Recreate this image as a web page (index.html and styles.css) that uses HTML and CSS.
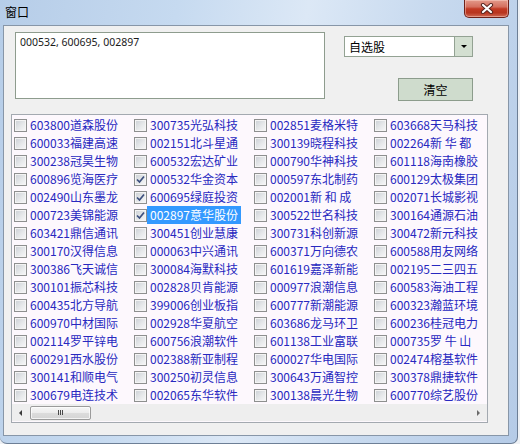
FILE: index.html
```html
<!DOCTYPE html>
<html>
<head>
<meta charset="utf-8">
<link rel="stylesheet" href="styles.css">
</head>
<body>
<div class="window">
  <div class="titlebar">
    <span class="title">窗口</span>
    <div class="close">
      <svg width="16" height="11" viewBox="0 0 16 11"><path d="M4 2 L12 9 M12 2 L4 9" stroke="#5a2620" stroke-width="4.2" stroke-linecap="round" fill="none"/><path d="M4 2 L12 9 M12 2 L4 9" stroke="#ffffff" stroke-width="2.2" stroke-linecap="round" fill="none"/></svg>
    </div>
  </div>
  <div class="client">
    <div class="top">
      <div class="codes">000532, 600695, 002897</div>
      <div class="side">
        <div class="combo"><span class="combo-text">自选股</span><span class="combo-btn"><span class="tri-down"></span></span></div>
        <div class="btn">清空</div>
      </div>
    </div>
    <div class="list">
      <div class="items">
        <div class="item"><span class="cb"></span><span class="lbl">603800道森股份</span></div>
        <div class="item"><span class="cb"></span><span class="lbl">600033福建高速</span></div>
        <div class="item"><span class="cb"></span><span class="lbl">300238冠昊生物</span></div>
        <div class="item"><span class="cb"></span><span class="lbl">600896览海医疗</span></div>
        <div class="item"><span class="cb"></span><span class="lbl">002490山东墨龙</span></div>
        <div class="item"><span class="cb"></span><span class="lbl">000723美锦能源</span></div>
        <div class="item"><span class="cb"></span><span class="lbl">603421鼎信通讯</span></div>
        <div class="item"><span class="cb"></span><span class="lbl">300170汉得信息</span></div>
        <div class="item"><span class="cb"></span><span class="lbl">300386飞天诚信</span></div>
        <div class="item"><span class="cb"></span><span class="lbl">300101振芯科技</span></div>
        <div class="item"><span class="cb"></span><span class="lbl">600435北方导航</span></div>
        <div class="item"><span class="cb"></span><span class="lbl">600970中材国际</span></div>
        <div class="item"><span class="cb"></span><span class="lbl">002114罗平锌电</span></div>
        <div class="item"><span class="cb"></span><span class="lbl">600291西水股份</span></div>
        <div class="item"><span class="cb"></span><span class="lbl">300141和顺电气</span></div>
        <div class="item"><span class="cb"></span><span class="lbl">300679电连技术</span></div>

        <div class="item"><span class="cb"></span><span class="lbl">300735光弘科技</span></div>
        <div class="item"><span class="cb"></span><span class="lbl">002151北斗星通</span></div>
        <div class="item"><span class="cb"></span><span class="lbl">600532宏达矿业</span></div>
        <div class="item"><span class="cb on"><svg width="11" height="11" viewBox="0 0 11 11"><path d="M2 5.5 L4.5 8 L9 2.5" stroke="#3d4f7e" stroke-width="1.7" fill="none"/></svg></span><span class="lbl">000532华金资本</span></div>
        <div class="item"><span class="cb on"><svg width="11" height="11" viewBox="0 0 11 11"><path d="M2 5.5 L4.5 8 L9 2.5" stroke="#3d4f7e" stroke-width="1.7" fill="none"/></svg></span><span class="lbl">600695绿庭投资</span></div>
        <div class="item"><span class="cb on"><svg width="11" height="11" viewBox="0 0 11 11"><path d="M2 5.5 L4.5 8 L9 2.5" stroke="#3d4f7e" stroke-width="1.7" fill="none"/></svg></span><span class="lbl sel">002897意华股份</span></div>
        <div class="item"><span class="cb"></span><span class="lbl">300451创业慧康</span></div>
        <div class="item"><span class="cb"></span><span class="lbl">000063中兴通讯</span></div>
        <div class="item"><span class="cb"></span><span class="lbl">300084海默科技</span></div>
        <div class="item"><span class="cb"></span><span class="lbl">002828贝肯能源</span></div>
        <div class="item"><span class="cb"></span><span class="lbl">399006创业板指</span></div>
        <div class="item"><span class="cb"></span><span class="lbl">002928华夏航空</span></div>
        <div class="item"><span class="cb"></span><span class="lbl">600756浪潮软件</span></div>
        <div class="item"><span class="cb"></span><span class="lbl">002388新亚制程</span></div>
        <div class="item"><span class="cb"></span><span class="lbl">300250初灵信息</span></div>
        <div class="item"><span class="cb"></span><span class="lbl">002065东华软件</span></div>

        <div class="item"><span class="cb"></span><span class="lbl">002851麦格米特</span></div>
        <div class="item"><span class="cb"></span><span class="lbl">300139晓程科技</span></div>
        <div class="item"><span class="cb"></span><span class="lbl">000790华神科技</span></div>
        <div class="item"><span class="cb"></span><span class="lbl">000597东北制药</span></div>
        <div class="item"><span class="cb"></span><span class="lbl">002001新 和 成</span></div>
        <div class="item"><span class="cb"></span><span class="lbl">300522世名科技</span></div>
        <div class="item"><span class="cb"></span><span class="lbl">300731科创新源</span></div>
        <div class="item"><span class="cb"></span><span class="lbl">600371万向德农</span></div>
        <div class="item"><span class="cb"></span><span class="lbl">601619嘉泽新能</span></div>
        <div class="item"><span class="cb"></span><span class="lbl">000977浪潮信息</span></div>
        <div class="item"><span class="cb"></span><span class="lbl">600777新潮能源</span></div>
        <div class="item"><span class="cb"></span><span class="lbl">603686龙马环卫</span></div>
        <div class="item"><span class="cb"></span><span class="lbl">601138工业富联</span></div>
        <div class="item"><span class="cb"></span><span class="lbl">600027华电国际</span></div>
        <div class="item"><span class="cb"></span><span class="lbl">300643万通智控</span></div>
        <div class="item"><span class="cb"></span><span class="lbl">300138晨光生物</span></div>

        <div class="item"><span class="cb"></span><span class="lbl">603668天马科技</span></div>
        <div class="item"><span class="cb"></span><span class="lbl">002264新 华 都</span></div>
        <div class="item"><span class="cb"></span><span class="lbl">601118海南橡胶</span></div>
        <div class="item"><span class="cb"></span><span class="lbl">600129太极集团</span></div>
        <div class="item"><span class="cb"></span><span class="lbl">002071长城影视</span></div>
        <div class="item"><span class="cb"></span><span class="lbl">300164通源石油</span></div>
        <div class="item"><span class="cb"></span><span class="lbl">300472新元科技</span></div>
        <div class="item"><span class="cb"></span><span class="lbl">600588用友网络</span></div>
        <div class="item"><span class="cb"></span><span class="lbl">002195二三四五</span></div>
        <div class="item"><span class="cb"></span><span class="lbl">600583海油工程</span></div>
        <div class="item"><span class="cb"></span><span class="lbl">600323瀚蓝环境</span></div>
        <div class="item"><span class="cb"></span><span class="lbl">600236桂冠电力</span></div>
        <div class="item"><span class="cb"></span><span class="lbl">000735罗 牛 山</span></div>
        <div class="item"><span class="cb"></span><span class="lbl">002474榕基软件</span></div>
        <div class="item"><span class="cb"></span><span class="lbl">300378鼎捷软件</span></div>
        <div class="item"><span class="cb"></span><span class="lbl">600770综艺股份</span></div>
      </div>
      <div class="hscroll">
        <div class="arrow-btn"><span class="tri-left"></span></div>
        <div class="track">
          <div class="thumb"><span class="grip"></span><span class="grip"></span><span class="grip"></span></div>
        </div>
        <div class="arrow-btn"><span class="tri-right"></span></div>
      </div>
    </div>
  </div>
</div>
</body>
</html>
```
FILE: styles.css
```css
* { box-sizing: border-box; }

body {
  margin: 0;
  background: #eef1f5;
  font-family: "Noto Sans CJK SC", "Noto Sans", sans-serif;
}

.window {
  width: 518px;
  height: 444px;
  display: flex;
  flex-direction: column;
  background: linear-gradient(100deg, #b6cde8 0%, #c6daf0 30%, #dce8f6 52%, #c8daef 72%, #b5cbe7 100%);
  border-right: 1px solid #6d7f96;
  border-bottom: 1px solid #6d7f96;
  border-radius: 0 0 7px 7px;
}

.titlebar {
  height: 25px;
  display: flex;
  align-items: flex-start;
  padding-left: 5px;
  flex: none;
}

.title {
  font-size: 12px;
  line-height: 16px;
  margin-top: 4px;
  color: #000;
}

.close {
  margin-left: auto;
  margin-right: 8px;
  width: 45px;
  height: 18px;
  border: 1px solid #6e2119;
  border-top: none;
  border-radius: 0 0 5px 5px;
  background: linear-gradient(#e39a8b 0%, #d5705f 40%, #c23a24 52%, #b8351f 75%, #cf6a55 100%);
  box-shadow: inset 0 0 0 1px rgba(255, 220, 210, 0.45);
  display: flex;
  align-items: center;
  justify-content: center;
}

.client {
  margin: 0 8px 7px 3px;
  flex: 1;
  border: 1px solid #8796a8;
  background: #f0f0f0;
  display: flex;
  flex-direction: column;
}

.top {
  display: flex;
  padding: 6px 0 0 11px;
}

.codes {
  width: 310px;
  height: 67px;
  border: 1px solid #8e9c8e;
  background: #fff;
  padding: 3px 4px;
  font-family: "Noto Sans", sans-serif;
  font-size: 10.5px;
  line-height: 13px;
  color: #1a1a1a;
}

.side {
  margin-left: 19px;
  width: 129px;
  padding-top: 4px;
  display: flex;
  flex-direction: column;
  align-items: flex-end;
}

.combo {
  width: 129px;
  height: 21px;
  border: 1px solid #93a293;
  background: #fff;
  display: flex;
}

.combo-text {
  flex: 1;
  padding-left: 4px;
  font-size: 12px;
  line-height: 19px;
  color: #000;
}

.combo-btn {
  width: 18px;
  border-left: 1px solid #93a293;
  background: #d3dfd1;
  display: flex;
  align-items: center;
  justify-content: center;
}

.tri-down {
  width: 0;
  height: 0;
  border-left: 3px solid transparent;
  border-right: 3px solid transparent;
  border-top: 3px solid #000;
}

.btn {
  margin-top: 21px;
  width: 75px;
  height: 23px;
  border: 1px solid #8c9c8c;
  background: #cfdccd;
  font-size: 12px;
  line-height: 21px;
  text-align: center;
  color: #000;
}

.list {
  margin: 13px 0 0 7px;
  width: 477px;
  height: 309px;
  border: 1px solid #a3a9b0;
  display: flex;
  flex-direction: column;
  background: #fdf8fd;
}

.items {
  flex: 1;
  display: grid;
  grid-template-rows: repeat(16, 18px);
  grid-auto-flow: column;
  grid-auto-columns: 120px;
  padding: 1px 0 0 1px;
  overflow: hidden;
}

.item {
  display: flex;
  align-items: center;
  height: 18px;
  white-space: nowrap;
  font-size: 12px;
  color: #2828c0;
}

.cb {
  flex: none;
  width: 13px;
  height: 13px;
  margin-left: 1px;
  border: 1px solid #8e8f8f;
  background: linear-gradient(135deg, #cbcfd5 0%, #e6e8ea 55%, #f8f8f9 100%);
  box-shadow: inset 0 0 0 1px #f4f4f4;
  display: flex;
  align-items: center;
  justify-content: center;
}

.lbl {
  padding: 0 3px;
  line-height: 18px;
}

.lbl.sel {
  background: #3399ff;
  color: #fff;
}

.hscroll {
  flex: none;
  height: 17px;
  display: flex;
  background: #eeeeee;
  margin-bottom: 1px;
}

.arrow-btn {
  width: 17px;
  display: flex;
  align-items: center;
  justify-content: center;
}

.tri-left {
  width: 0;
  height: 0;
  border-top: 3px solid transparent;
  border-bottom: 3px solid transparent;
  border-right: 3px solid #3a3a3a;
}

.tri-right {
  width: 0;
  height: 0;
  border-top: 3px solid transparent;
  border-bottom: 3px solid transparent;
  border-left: 3px solid #6a6a6a;
}

.track {
  flex: 1;
  display: flex;
  align-items: center;
}

.thumb {
  margin-left: 1px;
  width: 61px;
  height: 14px;
  border: 1px solid #9b9b9b;
  border-radius: 2px;
  background: linear-gradient(#f6f6f6 0%, #ececec 50%, #dcdcdc 51%, #d4d4d4 100%);
  box-shadow: inset 0 0 0 1px rgba(255, 255, 255, 0.7);
  display: flex;
  align-items: center;
  justify-content: center;
  gap: 1px;
}

.grip {
  width: 1px;
  height: 5px;
  background: #4a4a4a;
}
```
